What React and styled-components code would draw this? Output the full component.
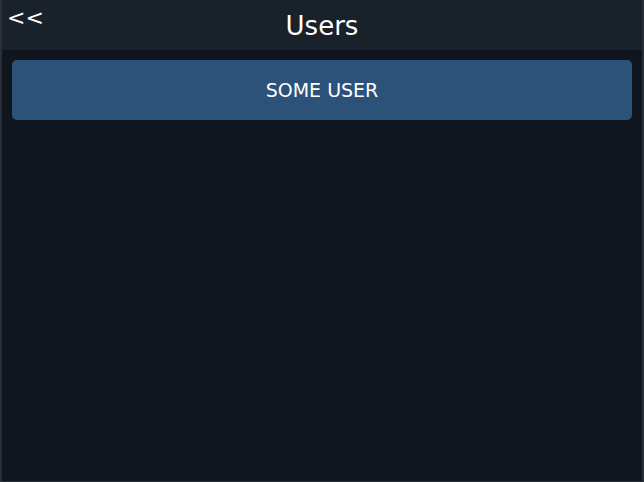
import React from 'react'
import styled, { createGlobalStyle } from 'styled-components'

const GlobalStyle = createGlobalStyle`
    html, body {
        margin: 0;
        padding: 0;
        background: #0f1620;
        font-family: "DejaVu Sans", sans-serif;
    }
    * {
        box-sizing: border-box;
    }
`

const Screen = styled.div`
    width: 100vw;
    height: 100vh;
    background: #0f1620;
    border: 2px solid #2a2e36;
    border-top: none;
    border-bottom-width: 1px;
    display: flex;
    flex-direction: column;
    color: #ffffff;
`

const Header = styled.header`
    position: relative;
    height: 50px;
    background: #19212b;
    display: flex;
    align-items: center;
    justify-content: center;
`

const Title = styled.h1`
    margin: 0;
    font-size: 26px;
    font-weight: 400;
    line-height: 1;
    padding-top: 1px;
`

const BackButton = styled.button`
    position: absolute;
    top: 7px;
    left: 5px;
    background: none;
    border: none;
    padding: 0;
    color: #ffffff;
    font-family: "DejaVu Sans", sans-serif;
    font-size: 22px;
    line-height: 1;
    cursor: pointer;
`

const List = styled.div`
    display: flex;
    flex-direction: column;
    gap: 10px;
    padding: 10px;
`

const UserButton = styled.button`
    height: 60px;
    border: none;
    border-radius: 5px;
    background: #2c5279;
    color: #ffffff;
    font-family: "DejaVu Sans", sans-serif;
    font-size: 19px;
    text-transform: uppercase;
    padding-bottom: 2px;
    cursor: pointer;
`

function App() {
    const users = ["Some user"]
    return (
        <>
            <GlobalStyle />
            <Screen>
                <Header>
                    <BackButton>&lt;&lt;</BackButton>
                    <Title>Users</Title>
                </Header>
                <List>
                    {users.map((u) => (
                        <UserButton key={u}>{u}</UserButton>
                    ))}
                </List>
            </Screen>
        </>
    )
}

export default App
